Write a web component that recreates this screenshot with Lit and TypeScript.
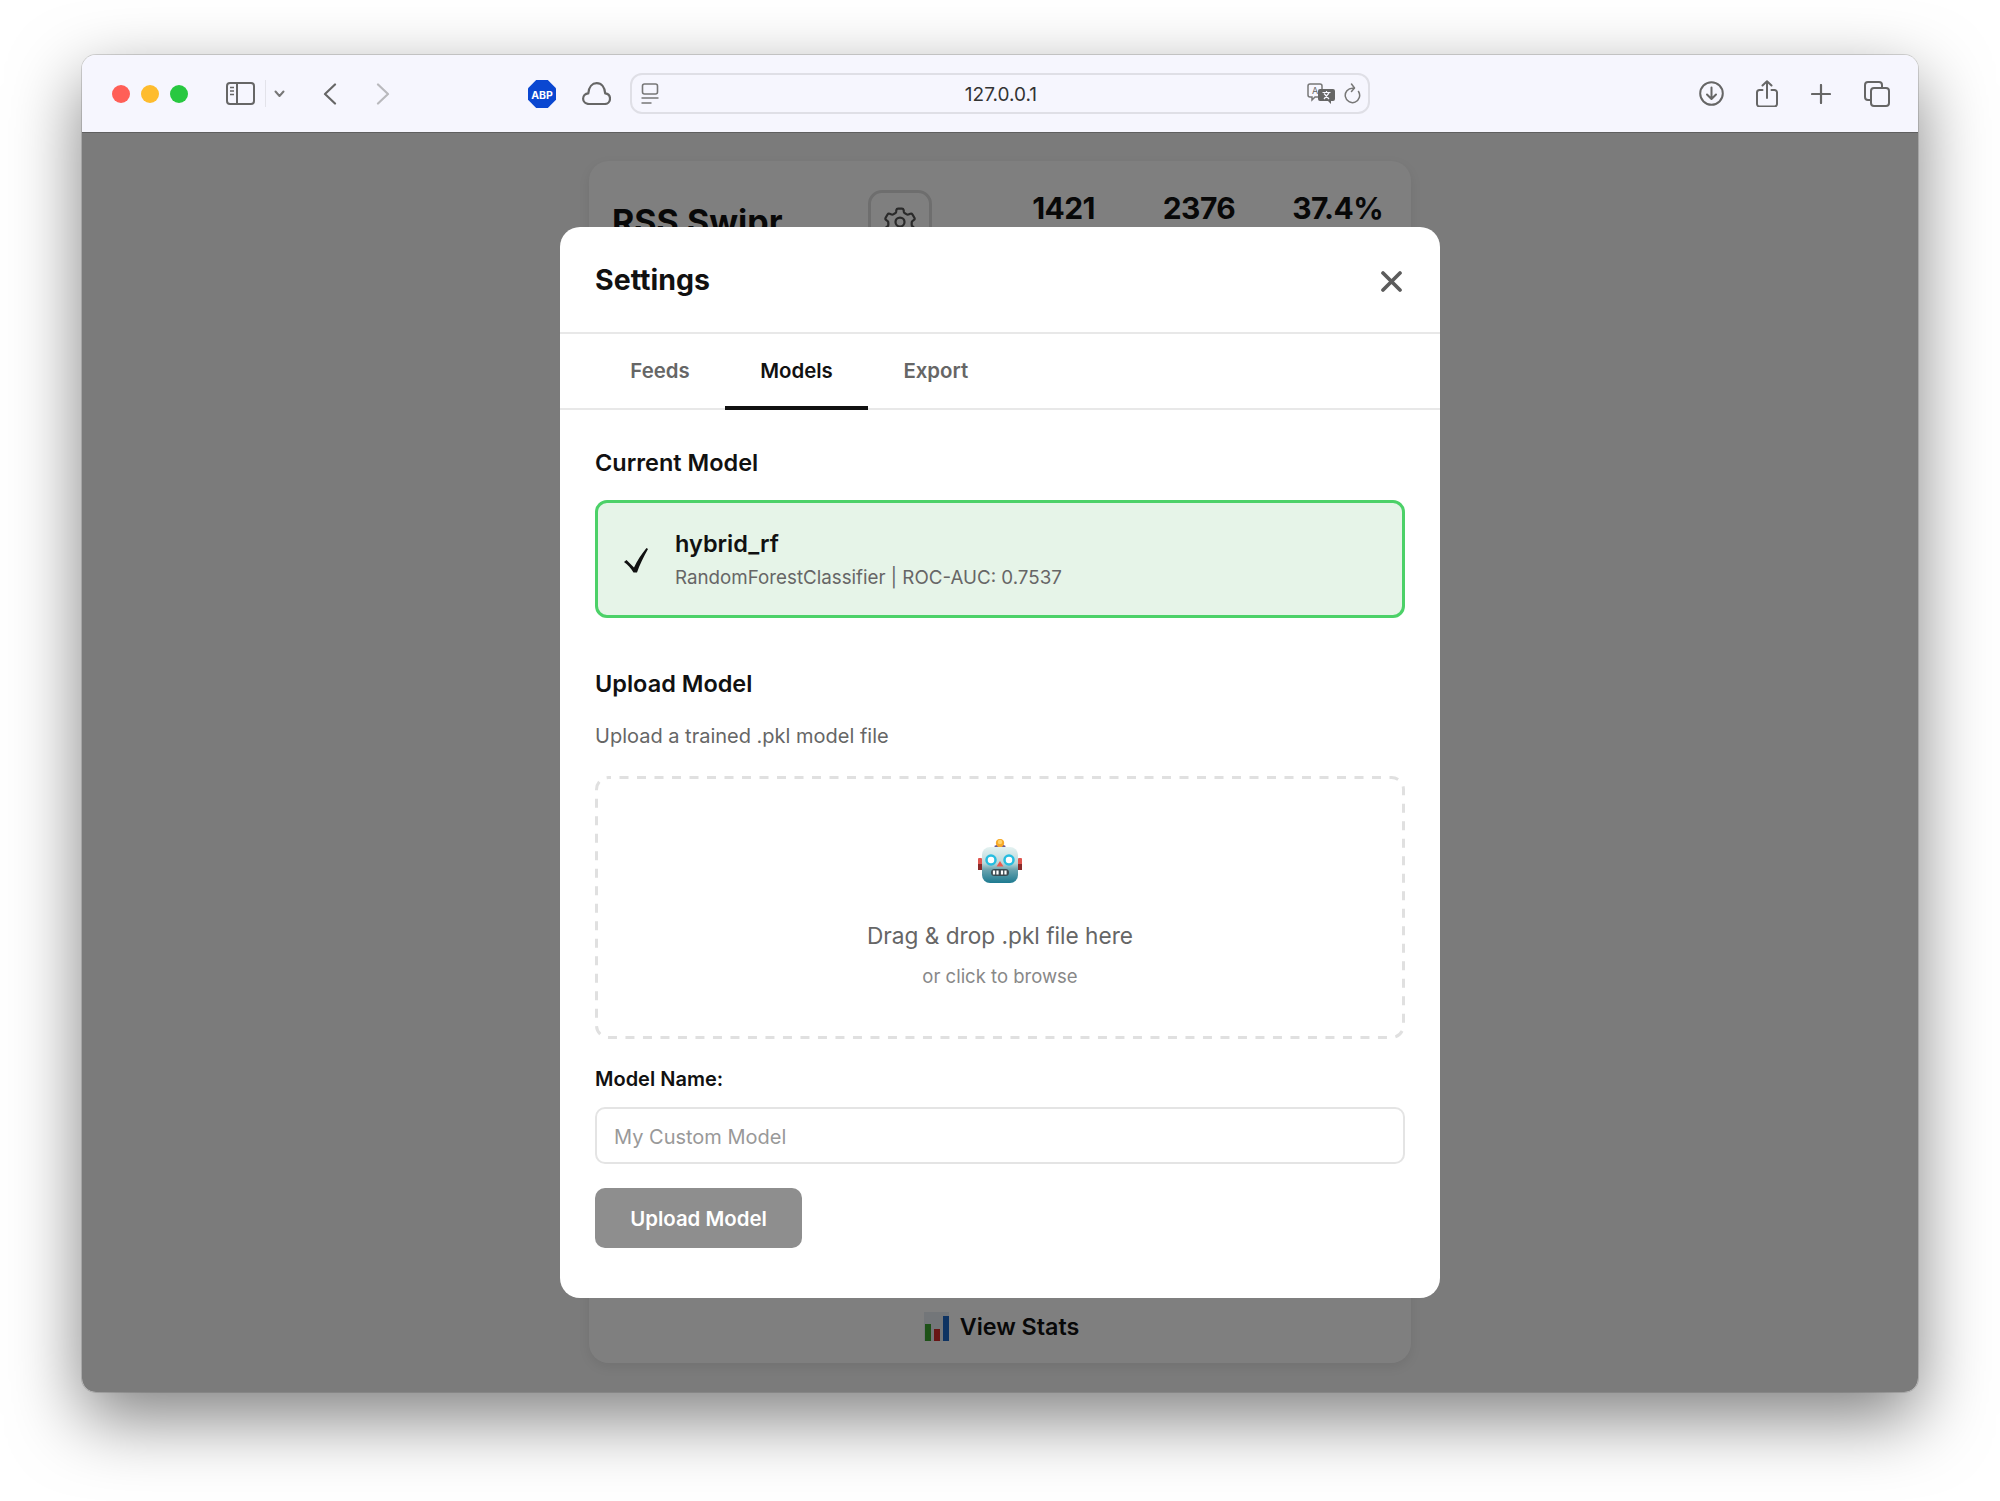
import { LitElement, html, css } from "lit";
import { customElement } from "lit/decorators.js";

@customElement("app-root")
export class AppRoot extends LitElement {
  static styles = css`
    :host { display: block; width: 2000px; height: 1501px; background: #fff; font-family: Inter, "Liberation Sans", sans-serif; overflow: hidden; }
    * { box-sizing: border-box; }
    .stage { padding: 55px 82px 109px; height: 1501px; }
    .window { height: 1337px; border-radius: 14px; overflow: hidden; display: flex; flex-direction: column; }
    .shadow { border-radius: 14px; box-shadow: 0 0 0 1px rgba(0,0,0,.14), 0 26px 70px rgba(0,0,0,.5); height: 1337px; }
    .toolbar { height: 78px; flex: none; background: #f6f6fe; border-bottom: 1px solid #5f5f5f; display: flex; align-items: center; color: #666; }
    .toolbar svg { display: block; flex: none; }
    .lights { display: flex; gap: 11.4px; margin-left: 29.5px; }
    .light { width: 18px; height: 18px; border-radius: 50%; }
    .red { background: #ff5f57; } .yellow { background: #febc2e; } .green { background: #28c840; }
    .ml-sidebar { margin-left: 37.7px; }
    .sep { width: 1px; height: 27px; background: #e3e3ea; margin-left: 10px; }
    .ml-chev { margin-left: 8.5px; }
    .ml-back { margin-left: 37.5px; }
    .ml-fwd { margin-left: 39px; }
    .ml-abp { margin-left: 138px; }
    .ml-cloud { margin-left: 26px; }
    .url { margin-left: 19px; width: 740px; height: 41px; border: 2px solid #dfdfe6; border-radius: 12px; display: flex; align-items: center; padding: 0 7px 0 9px; font-size: 19px; color: #333; }
    .url-text { flex: 1; text-align: center; padding-left: 36px; margin-top: 1px; }
    .ml-reload { margin-left: 9px; }
    .ml-dl { margin-left: 329.5px; }
    .ml-share { margin-left: 31.5px; }
    .ml-plus { margin-left: 33px; }
    .ml-tabs { margin-left: 33px; }

    .page { flex: 1; background: #f6f6f6; position: relative; padding: 28px 0 29px; display: flex; justify-content: center; }
    .card { width: 822px; background: #fff; border-radius: 20px; box-shadow: 0 4px 12px rgba(0,0,0,.08); display: flex; flex-direction: column; justify-content: space-between; color: #111; }
    .card-top { display: flex; padding: 29px 28px 0 23px; align-items: flex-start; }
    .brand { font-size: 34px; font-weight: 700; margin-top: 12px; line-height: 40px; width: 256px; }
    .gear { width: 64px; height: 64px; border: 3px solid #ddd; border-radius: 14px; display: flex; align-items: center; justify-content: center; flex: none; color: #555; }
    .stats { display: flex; flex: 1; justify-content: flex-end; gap: 57px; font-size: 30px; font-weight: 700; line-height: 36px; letter-spacing: -0.6px; }
    .s-first { margin-right: 11px; }
    .card-bottom { display: flex; align-items: center; justify-content: center; gap: 11px; font-size: 23.3px; font-weight: 600; height: 36px; margin-bottom: 19px; padding-left: 3px; }

    .overlay { position: absolute; inset: 0; background: rgba(0,0,0,.5); display: flex; align-items: center; justify-content: center; }
    .modal { width: 880px; background: #fff; border-radius: 20px; color: #111; }
    .m-head { height: 107px; border-bottom: 2px solid #e8e8e8; display: flex; align-items: center; justify-content: space-between; padding: 0 35px; }
    .m-title { font-size: 28.5px; font-weight: 700; }
    .close { margin: 4px 3px 0 0; }
    .tabs { height: 76px; border-bottom: 2px solid #e8e8e8; display: flex; padding-left: 35px; }
    .tab { padding: 0 35.3px; height: 76px; line-height: 73px; font-size: 20.4px; font-weight: 600; color: #666; }
    .tab.active { color: #111; border-bottom: 4px solid #111; }
    .m-body { padding: 40px 35px 50px; display: flex; flex-direction: column; }
    h3 { margin: 0; font-size: 23.5px; line-height: 26px; font-weight: 600; }
    .current { margin-top: 24px; height: 118px; border: 3px solid #4cd168; border-radius: 12px; background: #e6f4e8; display: flex; align-items: center; padding-left: 26px; gap: 27px; }
    .check { margin-top: 2px; }
    .c-name { font-size: 23.5px; line-height: 28px; font-weight: 600; }
    .c-sub { font-size: 18.75px; line-height: 22px; color: #666; margin-top: 9px; }
    .up-h { margin-top: 53px; }
    .hint { margin-top: 28px; font-size: 20px; line-height: 22px; color: #666; }
    .drop { margin-top: 29px; height: 263px; position: relative; display: flex; flex-direction: column; align-items: center; padding-top: 63px; }
    .dash { position: absolute; inset: 0; }
    .d-main { margin-top: 39px; font-size: 22.65px; line-height: 28px; color: #666; }
    .d-sub { margin-top: 15px; font-size: 18.5px; line-height: 22px; color: #888; }
    label { margin-top: 29px; font-size: 20px; line-height: 22px; font-weight: 600; }
    .input { margin-top: 17px; height: 57px; border: 2px solid #e4e4e4; border-radius: 10px; padding: 2px 17px 0; display: flex; align-items: center; font-size: 20px; color: #999; }
    .btn { margin-top: 24px; width: 207px; height: 60px; border-radius: 10px; background: #8e8e8e; color: #fff; font-size: 20.4px; font-weight: 600; display: flex; align-items: center; justify-content: center; }
  `;

  render() {
    return html`<div class="stage"><div class="shadow"><div class="window">
      <div class="toolbar">
        <div class="lights"><div class="light red"></div><div class="light yellow"></div><div class="light green"></div></div>
        <svg class="ml-sidebar" width="29" height="23" viewBox="0 0 29 23" fill="none" stroke="#666" stroke-width="2"><rect x="1" y="1" width="27" height="21" rx="3"/><path d="M11 1v21"/><path d="M4 5.5h4M4 9h4M4 12.5h4" stroke-width="1.6"/></svg>
        <div class="sep"></div>
        <svg class="ml-chev" width="11" height="8" viewBox="0 0 11 8" fill="none" stroke="#777" stroke-width="2" stroke-linecap="round" stroke-linejoin="round"><path d="M1.5 1.5 5.5 6l4-4.5"/></svg>
        <svg class="ml-back" width="14" height="22" viewBox="0 0 14 22" fill="none" stroke="#666" stroke-width="2.2" stroke-linecap="round" stroke-linejoin="round"><path d="M12 1.5 2 11l10 9.5"/></svg>
        <svg class="ml-fwd" width="14" height="22" viewBox="0 0 14 22" fill="none" stroke="#b9b9bd" stroke-width="2.2" stroke-linecap="round" stroke-linejoin="round"><path d="M2 1.5 12 11 2 20.5"/></svg>
        <svg class="ml-abp" width="28" height="28" viewBox="0 0 28 28"><path d="M8.2 0h11.6L28 8.2v11.6L19.8 28H8.2L0 19.8V8.2z" fill="#0a47d1"/><text x="14" y="18.5" text-anchor="middle" font-family="Inter, sans-serif" font-size="10.5" font-weight="700" fill="#fff">ABP</text></svg>
        <svg class="ml-cloud" width="29" height="23" viewBox="0 0 29 23" fill="none" stroke="#666" stroke-width="2.2" stroke-linejoin="round"><path d="M7 22h15.5c3.2 0 5.5-2.3 5.5-5.3 0-2.8-2-5-4.8-5.3C22.7 5.4 19.5 1.2 14.7 1.2 10.2 1.2 6.8 5 6.3 11.300 3.2 11.5 1.1 14 1.1 16.8 1.1 19.8 3.7 22 7 22Z"/></svg>
        <div class="url">
          <svg width="18" height="21" viewBox="0 0 18 21" fill="none" stroke="#777" stroke-width="1.6"><rect x="1.5" y="1" width="15" height="10" rx="2"/><path d="M.5 15h17M.5 20h10"/></svg>
          <div class="url-text">127.0.0.1</div>
          <svg width="28" height="21" viewBox="0 0 28 21"><path d="M3 1h10c1.2 0 2 .8 2 2v9c0 1.2-.8 2-2 2H8l-3 3v-3H3c-1.2 0-2-.8-2-2V3c0-1.2.8-2 2-2Z" fill="#f6f6fe" stroke="#777" stroke-width="1.5"/><text x="8" y="11" text-anchor="middle" font-family="Inter, sans-serif" font-size="9" fill="#666">A</text><path d="M13 6h13a2 2 0 0 1 2 2v8a2 2 0 0 1-2 2h-2v3l-3-3h-8a2 2 0 0 1-2-2V8a2 2 0 0 1 2-2Z" fill="#666"/><path d="M15.5 9.5h8M19.5 8v1.5M17 16l5-6M17 10.5l5 5.5" stroke="#f6f6fe" stroke-width="1.2" fill="none"/></svg>
          <svg class="ml-reload" width="17" height="21" viewBox="0 0 17 21" fill="none" stroke="#777" stroke-width="1.5" stroke-linecap="round" stroke-linejoin="round"><path d="M14.5 8.5a7.2 7.2 0 1 1-6-3.3H10"/><path d="M7.5 1 10.5 5 7.5 8.5"/></svg>
        </div>
        <svg class="ml-dl" width="25" height="25" viewBox="0 0 25 25" fill="none" stroke="#666" stroke-width="2" stroke-linecap="round" stroke-linejoin="round"><circle cx="12.5" cy="12.5" r="11.3"/><path d="M12.5 6.5v11M8 13.5l4.5 4.5 4.5-4.5"/></svg>
        <svg class="ml-share" width="22" height="27" viewBox="0 0 22 27" fill="none" stroke="#666" stroke-width="2" stroke-linecap="round" stroke-linejoin="round"><path d="M6.5 10H3.500A2.500 2.500 0 0 0 1 12.500v11.500A2.500 2.500 0 0 0 3.500 26.500h15a2.500 2.500 0 0 0 2.500-2.500V12.500A2.500 2.500 0 0 0 18.500 10h-3"/><path d="M11 18V1.5M6.5 5.500 11 1.200l4.500 4.300"/></svg>
        <svg class="ml-plus" width="20" height="20" viewBox="0 0 20 20" stroke="#666" stroke-width="2.2" stroke-linecap="round"><path d="M10 1v18M1 10h18"/></svg>
        <svg class="ml-tabs" width="26" height="26" viewBox="0 0 26 26" fill="none" stroke="#666" stroke-width="2"><path d="M6.5 19H4a3 3 0 0 1-3-3V4a3 3 0 0 1 3-3h11a3 3 0 0 1 3 3v2.5"/><rect x="7" y="7" width="18" height="18" rx="3"/></svg>
      </div>
      <div class="page">
        <div class="card">
          <div class="card-top">
            <div class="brand">RSS Swipr</div>
            <div class="gear"><svg width="36" height="36" viewBox="0 0 24 24" fill="none" stroke="currentColor" stroke-width="1.5" stroke-linecap="round" stroke-linejoin="round"><path d="M9.6 3.9c.1-.5.5-.9 1.1-.9h2.6c.6 0 1 .4 1.1.9l.2 1.4c.1.4.3.7.7.9l1.2.7c.3.2.7.2 1.1.1l1.3-.5c.5-.2 1.1 0 1.4.5l1.3 2.2c.3.5.2 1.1-.3 1.4l-1.1.9c-.3.2-.4.6-.4 1v1.3c0 .4.1.8.4 1l1.1.9c.4.3.5.9.3 1.4l-1.3 2.2c-.3.5-.9.7-1.4.5l-1.3-.5c-.4-.1-.8-.1-1.1.1l-1.2.7c-.4.2-.6.5-.7.9l-.2 1.4c-.1.5-.5.9-1.1.9h-2.6c-.6 0-1-.4-1.1-.9l-.2-1.4c-.1-.4-.3-.7-.7-.9l-1.2-.7c-.3-.2-.7-.2-1.1-.1l-1.3.5c-.5.2-1.1 0-1.4-.5l-1.3-2.2c-.3-.5-.2-1.1.3-1.4l1.1-.9c.3-.2.4-.6.4-1v-1.3c0-.4-.1-.8-.4-1l-1.1-.9c-.4-.3-.5-.9-.3-1.4l1.3-2.2c.3-.5.9-.7 1.4-.5l1.3.5c.4.1.8.1 1.1-.1l1.2-.7c.4-.2.6-.5.7-.9z"/><circle cx="12" cy="12" r="3"/></svg></div>
            <div class="stats"><span class="s-first">1421</span><span>2376</span><span>37.4%</span></div>
          </div>
          <div class="card-bottom">
            <svg width="25" height="29" viewBox="0 0 25 29"><rect width="25" height="29" fill="#e6edf2"/><rect x="1" y="12" width="6" height="17" fill="#3ba32f"/><rect x="10" y="17" width="6" height="12" fill="#d12a2a"/><rect x="19" y="4" width="6" height="25" fill="#1c66c4"/></svg>
            <span>View Stats</span>
          </div>
        </div>
        <div class="overlay">
          <div class="modal">
            <div class="m-head">
              <div class="m-title">Settings</div>
              <svg class="close" width="21" height="21" viewBox="0 0 21 21" stroke="#5c5c5c" stroke-width="3.7" stroke-linecap="round"><path d="M2 2l17 17M19 2 2 19"/></svg>
            </div>
            <div class="tabs"><div class="tab">Feeds</div><div class="tab active">Models</div><div class="tab">Export</div></div>
            <div class="m-body">
              <h3>Current Model</h3>
              <div class="current">
                <svg class="check" width="24" height="25" viewBox="0 0 24 25"><path d="M0 14 2.5 12 10 19.5C13 13 17.500 6 22.500 0L24 1C19.500 9 15.500 17 13 24.500H9.500C7 20 4 17 0 14Z" fill="#111"/></svg>
                <div><div class="c-name">hybrid_rf</div><div class="c-sub">RandomForestClassifier | ROC-AUC: 0.7537</div></div>
              </div>
              <h3 class="up-h">Upload Model</h3>
              <div class="hint">Upload a trained .pkl model file</div>
              <div class="drop">
                <svg class="dash" width="810" height="263" viewBox="0 0 810 263" fill="none"><rect x="1.5" y="1.5" width="807" height="260" rx="12" stroke="#e0e0e0" stroke-width="3" stroke-dasharray="9 8.5" stroke-dashoffset="6.5"/></svg>
                <svg width="44" height="44" viewBox="0 0 44 44">
                  <defs><linearGradient id="h" x1="0" y1="0" x2="0" y2="1"><stop offset="0" stop-color="#e4f2f1"/><stop offset=".45" stop-color="#b9d8da"/><stop offset=".62" stop-color="#6da5b0"/><stop offset="1" stop-color="#1d7a90"/></linearGradient></defs>
                  <rect x="0" y="19" width="4" height="12" rx="1" fill="#e0564f"/><rect x="40" y="19" width="4" height="12" rx="1" fill="#e0564f"/>
                  <rect x="0" y="25" width="4" height="6" fill="#8a2a2a"/><rect x="40" y="25" width="4" height="6" fill="#8a2a2a"/>
                  <path d="M16 9a6 4 0 0 1 12 0v2H16z" fill="#6a5a96"/>
                  <circle cx="22" cy="4" r="4.2" fill="#f7a928"/><circle cx="22" cy="3" r="2.2" fill="#ffd36a"/>
                  <rect x="4" y="8" width="36" height="36" rx="8" fill="url(#h)"/>
                  <circle cx="13" cy="21" r="4.5" fill="#fff" stroke="#26bde0" stroke-width="2.5"/>
                  <circle cx="31" cy="21" r="4.5" fill="#fff" stroke="#26bde0" stroke-width="2.5"/>
                  <path d="M22 22l3.5 5.500h-7z" fill="#ec5a4f"/>
                  <rect x="13" y="30" width="18" height="7" rx="3.5" fill="#3a4a50"/>
                  <path d="M16 31.500v4M19.500 31.500v4M24 31.500v4M27.500 31.500v4" stroke="#fff" stroke-width="2.2"/>
                </svg>
                <div class="d-main">Drag &amp; drop .pkl file here</div>
                <div class="d-sub">or click to browse</div>
              </div>
              <label>Model Name:</label>
              <div class="input">My Custom Model</div>
              <div class="btn">Upload Model</div>
            </div>
          </div>
        </div>
      </div>
    </div></div></div>`;
  }
}
